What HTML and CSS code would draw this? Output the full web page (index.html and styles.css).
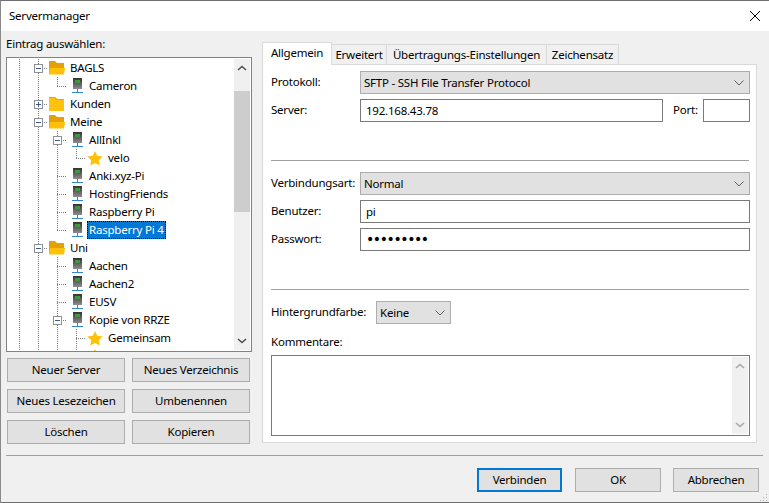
FILE: index.html

```html
<!DOCTYPE html>
<html lang="de">
<head>
  <meta charset="UTF-8">
  <title>Servermanager</title>
  <link rel="stylesheet" href="styles.css">
</head>
<body>
  <svg class="defs" width="0" height="0">
    <defs>
      <linearGradient id="tower" x1="0" y1="0" x2="0" y2="1">
        <stop offset="0" stop-color="#333"/>
        <stop offset="1" stop-color="#8c8c8c"/>
      </linearGradient>
    </defs>
    <symbol id="folder-open" viewBox="0 0 16 16">
      <path d="M0 1h6l2 2h7v11H0z" fill="#e3a008"/>
      <path d="M1 8h15l-1 6.500H0z" fill="#ffc107"/>
    </symbol>
    <symbol id="folder" viewBox="0 0 16 16">
      <path d="M0 1h6l2 2h7v12H0z" fill="#ffc20e"/>
      <path d="M0 1h6l2 2h7v1H7L5 2H0z" fill="#e8a60a"/>
    </symbol>
    <symbol id="server" viewBox="0 0 16 16">
      <path d="M5 0h9v11H5z" fill="url(#tower)"/>
      <path d="M7 2h5v3H7z" fill="#3f9a3f"/>
      <path d="M9 11h1v4H9z" fill="#2f86d6"/>
      <path d="M4 14h11v1H4z" fill="#2f86d6"/>
    </symbol>
    <symbol id="star" viewBox="0 0 16 16">
      <path d="M8 1l2.300 4.800 5.400.7-4 3.700 1.100 5.300L8 12.900l-4.800 2.600 1.100-5.300-4-3.700 5.400-.7z" fill="#ffc107"/>
    </symbol>
    <symbol id="chevron" viewBox="0 0 10 6">
      <path d="M1 5l4-3.500L9 5" fill="none" stroke="currentColor" stroke-width="1.600"/>
    </symbol>
    <symbol id="chevron-thin" viewBox="0 0 10 6">
      <path d="M.5 .5L5 5 9.500 .5" fill="none" stroke="currentColor"/>
    </symbol>
  </svg>

  <div class="window">
    <div class="titlebar">
      <span>Servermanager</span>
      <svg class="close" width="10" height="10" viewBox="0 0 10 10"><path d="M0 0l10 10M10 0L0 10" stroke="#000" fill="none"/></svg>
    </div>

    <div class="main">
      <div class="left">
        <div class="left-label">Eintrag auswählen:</div>
        <div class="tree">
          <div class="tree-rows">
            <div class="row"><span class="cell line"></span><span class="cell tee"><i class="box"><b></b></i></span><svg class="icon"><use href="#folder-open"/></svg><span class="name">BAGLS</span></div>
            <div class="row"><span class="cell line"></span><span class="cell line"></span><span class="cell elbow"></span><svg class="icon"><use href="#server"/></svg><span class="name">Cameron</span></div>
            <div class="row"><span class="cell line"></span><span class="cell tee"><i class="box plus"><b></b></i></span><svg class="icon"><use href="#folder"/></svg><span class="name">Kunden</span></div>
            <div class="row"><span class="cell line"></span><span class="cell tee"><i class="box"><b></b></i></span><svg class="icon"><use href="#folder-open"/></svg><span class="name">Meine</span></div>
            <div class="row"><span class="cell line"></span><span class="cell line"></span><span class="cell tee"><i class="box"><b></b></i></span><svg class="icon"><use href="#server"/></svg><span class="name">AllInkl</span></div>
            <div class="row"><span class="cell line"></span><span class="cell line"></span><span class="cell line"></span><span class="cell elbow"></span><svg class="icon"><use href="#star"/></svg><span class="name">velo</span></div>
            <div class="row"><span class="cell line"></span><span class="cell line"></span><span class="cell tee"></span><svg class="icon"><use href="#server"/></svg><span class="name">Anki.xyz-Pi</span></div>
            <div class="row"><span class="cell line"></span><span class="cell line"></span><span class="cell tee"></span><svg class="icon"><use href="#server"/></svg><span class="name">HostingFriends</span></div>
            <div class="row"><span class="cell line"></span><span class="cell line"></span><span class="cell tee"></span><svg class="icon"><use href="#server"/></svg><span class="name">Raspberry Pi</span></div>
            <div class="row"><span class="cell line"></span><span class="cell line"></span><span class="cell elbow"></span><svg class="icon"><use href="#server"/></svg><span class="name selected">Raspberry Pi 4</span></div>
            <div class="row"><span class="cell line"></span><span class="cell tee"><i class="box"><b></b></i></span><svg class="icon"><use href="#folder-open"/></svg><span class="name">Uni</span></div>
            <div class="row"><span class="cell line"></span><span class="cell line"></span><span class="cell tee"></span><svg class="icon"><use href="#server"/></svg><span class="name">Aachen</span></div>
            <div class="row"><span class="cell line"></span><span class="cell line"></span><span class="cell tee"></span><svg class="icon"><use href="#server"/></svg><span class="name">Aachen2</span></div>
            <div class="row"><span class="cell line"></span><span class="cell line"></span><span class="cell tee"></span><svg class="icon"><use href="#server"/></svg><span class="name">EUSV</span></div>
            <div class="row"><span class="cell line"></span><span class="cell line"></span><span class="cell tee"><i class="box"><b></b></i></span><svg class="icon"><use href="#server"/></svg><span class="name">Kopie von RRZE</span></div>
            <div class="row"><span class="cell line"></span><span class="cell line"></span><span class="cell line"></span><span class="cell tee"></span><svg class="icon"><use href="#star"/></svg><span class="name">Gemeinsam</span></div>
            <div class="row"><span class="cell line"></span><span class="cell line"></span><span class="cell line"></span><span class="cell tee"></span><svg class="icon"><use href="#star"/></svg></div>
          </div>
          <div class="scrollbar">
            <svg class="arrow"><use href="#chevron"/></svg>
            <div class="thumb"></div>
            <svg class="arrow down"><use href="#chevron"/></svg>
          </div>
        </div>
        <div class="tree-buttons">
          <button>Neuer Server</button>
          <button>Neues Verzeichnis</button>
          <button>Neues Lesezeichen</button>
          <button>Umbenennen</button>
          <button>Löschen</button>
          <button>Kopieren</button>
        </div>
      </div>

      <div class="right">
        <div class="tabs">
          <div class="tab active">Allgemein</div>
          <div class="tab tab-extended">Erweitert</div>
          <div class="tab tab-transfer">Übertragungs-Einstellungen</div>
          <div class="tab tab-charset">Zeichensatz</div>
        </div>
        <div class="panel">
          <div class="form-row">
            <label>Protokoll:</label>
            <div class="select grow">SFTP - SSH File Transfer Protocol<svg class="caret"><use href="#chevron-thin"/></svg></div>
          </div>
          <div class="form-row">
            <label>Server:</label>
            <input class="grow" type="text" value="192.168.43.78">
            <label class="port-label">Port:</label>
            <input class="port" type="text">
          </div>
          <hr class="sep">
          <div class="form-row">
            <label>Verbindungsart:</label>
            <div class="select grow">Normal<svg class="caret"><use href="#chevron-thin"/></svg></div>
          </div>
          <div class="form-row">
            <label>Benutzer:</label>
            <input class="grow" type="text" value="pi">
          </div>
          <div class="form-row">
            <label>Passwort:</label>
            <input class="grow password" type="password" value="raspberry">
          </div>
          <hr class="sep">
          <div class="form-row">
            <label class="color-label">Hintergrundfarbe:</label>
            <div class="select color">Keine<svg class="caret"><use href="#chevron-thin"/></svg></div>
          </div>
          <div class="comment-label">Kommentare:</div>
          <div class="comment">
            <div class="scrollbar light">
              <svg class="arrow"><use href="#chevron"/></svg>
              <svg class="arrow down"><use href="#chevron"/></svg>
            </div>
          </div>
        </div>
      </div>
    </div>

    <hr class="footer-sep">
    <div class="footer">
      <button class="default">Verbinden</button>
      <button>OK</button>
      <button>Abbrechen</button>
    </div>
    <div class="grip"></div>
  </div>
</body>
</html>
```

FILE: styles.css

```css
* {
  box-sizing: border-box;
}
body {
  margin: 0;
  background-color: #f0f0f0;
  overflow: hidden;
}
.defs {
  display: block;
  height: 0;
}
.window {
  position: relative;
  width: 769px;
  height: 503px;
  display: flex;
  flex-direction: column;
  border-top: 1px solid #707070;
  border-left: 1px solid #8a8a8a;
  border-bottom: 1px solid #707070;
  background-color: #f0f0f0;
  font-family: "Noto Sans", sans-serif;
  font-size: 11.5px;
  letter-spacing: -0.22px;
  color: #000;
}
.titlebar {
  height: 30px;
  flex: none;
  display: flex;
  align-items: center;
  justify-content: space-between;
  padding: 0 9px 1px 8px;
  background-color: #fff;
}
.main {
  height: 424px;
  flex: none;
  display: flex;
  padding-left: 5px;
}
.left {
  width: 246px;
  flex: none;
}
.left-label {
  height: 26px;
  line-height: 26px;
}
.tree {
  height: 295px;
  display: flex;
  border: 1px solid #828282;
  background-color: #fff;
}
.tree-rows {
  flex: 1;
  height: 293px;
  padding: 1px 0 0 3px;
  overflow: hidden;
}
.row {
  height: 18px;
  display: flex;
  align-items: flex-start;
}
.cell {
  width: 19px;
  height: 18px;
  flex: none;
  background-repeat: no-repeat;
}
.line {
  background-image: repeating-linear-gradient(#808080 0 1px, transparent 1px 2px);
  background-size: 1px 18px;
  background-position: 9px 0;
}
.tee {
  background-image: repeating-linear-gradient(#808080 0 1px, transparent 1px 2px), repeating-linear-gradient(90deg, #808080 0 1px, transparent 1px 2px);
  background-size: 1px 18px, 10px 1px;
  background-position: 9px 0, 9px 9px;
}
.elbow {
  background-image: repeating-linear-gradient(#808080 0 1px, transparent 1px 2px), repeating-linear-gradient(90deg, #808080 0 1px, transparent 1px 2px);
  background-size: 1px 10px, 10px 1px;
  background-position: 9px 0, 9px 9px;
}
.box {
  display: flex;
  align-items: center;
  justify-content: center;
  width: 9px;
  height: 9px;
  margin: 5px 0 0 5px;
  border: 1px solid #919191;
  background-color: #fff;
}
.box b {
  display: block;
  width: 5px;
  height: 1px;
  background-color: #3c5a96;
}
.plus b {
  height: 5px;
  background-image: linear-gradient(#3c5a96, #3c5a96), linear-gradient(#3c5a96, #3c5a96);
  background-color: transparent;
  background-repeat: no-repeat;
  background-size: 5px 1px, 1px 5px;
  background-position: 0 2px, 2px 0;
}
.icon {
  width: 16px;
  height: 16px;
  flex: none;
  margin: 1px 0 0 1px;
}
.name {
  height: 18px;
  line-height: 17px;
  margin-left: 3px;
  padding: 0 2px;
  white-space: nowrap;
}
.selected {
  background-color: #0078d7;
  color: #fff;
  outline: 1px dotted #000;
  outline-offset: -1px;
}
.scrollbar {
  width: 16px;
  flex: none;
  margin: 1px;
  display: flex;
  flex-direction: column;
  align-items: center;
  justify-content: space-between;
  background-color: #f0f0f0;
  color: #505050;
}
.arrow {
  width: 10px;
  height: 6px;
  flex: none;
  margin: 6px 0;
}
.arrow.down {
  transform: scaleY(-1);
}
.thumb {
  width: 16px;
  height: 121px;
  flex: none;
  margin: 14px 0 auto;
  background-color: #cdcdcd;
}
.light {
  color: #a8a8a8;
}
button {
  height: 24px;
  padding: 0 0 2px;
  border: 1px solid #adadad;
  background-color: #e1e1e1;
  color: #000;
  font: inherit;
  letter-spacing: inherit;
}
.tree-buttons {
  display: grid;
  grid-template-columns: 118px 118px;
  gap: 7px;
  margin: 6px 0 0 1px;
}
.right {
  width: 495px;
  flex: none;
  margin-left: 10px;
  padding-top: 11px;
}
.tabs {
  display: flex;
  align-items: flex-end;
  height: 22px;
}
.tab {
  height: 20px;
  line-height: 20px;
  text-align: center;
  border: 1px solid #d9d9d9;
  border-bottom: none;
  border-left: none;
  background-color: #f0f0f0;
  white-space: nowrap;
}
.tab.active {
  position: relative;
  width: 70px;
  height: 23px;
  margin-bottom: -1px;
  line-height: 19px;
  border-left: 1px solid #d9d9d9;
  background-color: #fff;
}
.tab-extended {
  width: 55px;
}
.tab-transfer {
  width: 160px;
}
.tab-charset {
  width: 72px;
}
.panel {
  height: 379px;
  padding: 6px 6px 0 8px;
  border: 1px solid #d9d9d9;
  background-color: #fff;
}
.form-row {
  display: flex;
  align-items: center;
  height: 23px;
  margin-bottom: 5px;
}
label {
  width: 89px;
  flex: none;
  padding-bottom: 3px;
}
.grow {
  flex: 1;
  min-width: 0;
}
.select {
  height: 23px;
  display: flex;
  align-items: center;
  justify-content: space-between;
  padding: 0 5px 0 3px;
  border: 1px solid #adadad;
  background-color: #e1e1e1;
}
.caret {
  width: 10px;
  height: 6px;
  color: #606060;
}
input {
  height: 23px;
  padding: 0 5px 1px;
  border: 1px solid #7a7a7a;
  border-radius: 0;
  outline: none;
  background-color: #fff;
  color: #000;
  font: inherit;
  letter-spacing: inherit;
}
.password {
  font-family: "DejaVu Sans", sans-serif;
  font-size: 14px;
  letter-spacing: -1.4px;
}
.port-label {
  width: 30px;
  margin-left: 10px;
}
.port {
  width: 47px;
  flex: none;
}
.sep {
  height: 1px;
  margin: 38px 1px 11px 0;
  border: none;
  background-color: #a0a0a0;
}
.color-label {
  width: 105px;
}
.color {
  width: 75px;
}
.comment-label {
  height: 18px;
  line-height: 18px;
  margin-top: 9px;
  margin-bottom: 4px;
}
.comment {
  height: 81px;
  display: flex;
  justify-content: flex-end;
  border: 1px solid #7a7a7a;
}
.footer-sep {
  width: 757px;
  height: 1px;
  flex: none;
  margin: 0 0 0 5px;
  border: none;
  background-color: #a0a0a0;
}
.footer {
  flex: 1;
  display: flex;
  justify-content: flex-end;
  gap: 12px;
  padding: 12px 10px 0 0;
}
.footer button {
  width: 86px;
}
.footer .default {
  width: 85px;
  margin-right: 1px;
  border: 2px solid #0078d7;
}
.grip {
  position: absolute;
  right: 2px;
  bottom: 1px;
  width: 8px;
  height: 8px;
  background-image: radial-gradient(#b4b4b4 1px, transparent 1px);
  background-size: 3px 3px;
  clip-path: polygon(100% 0, 100% 100%, 0 100%);
}
```
